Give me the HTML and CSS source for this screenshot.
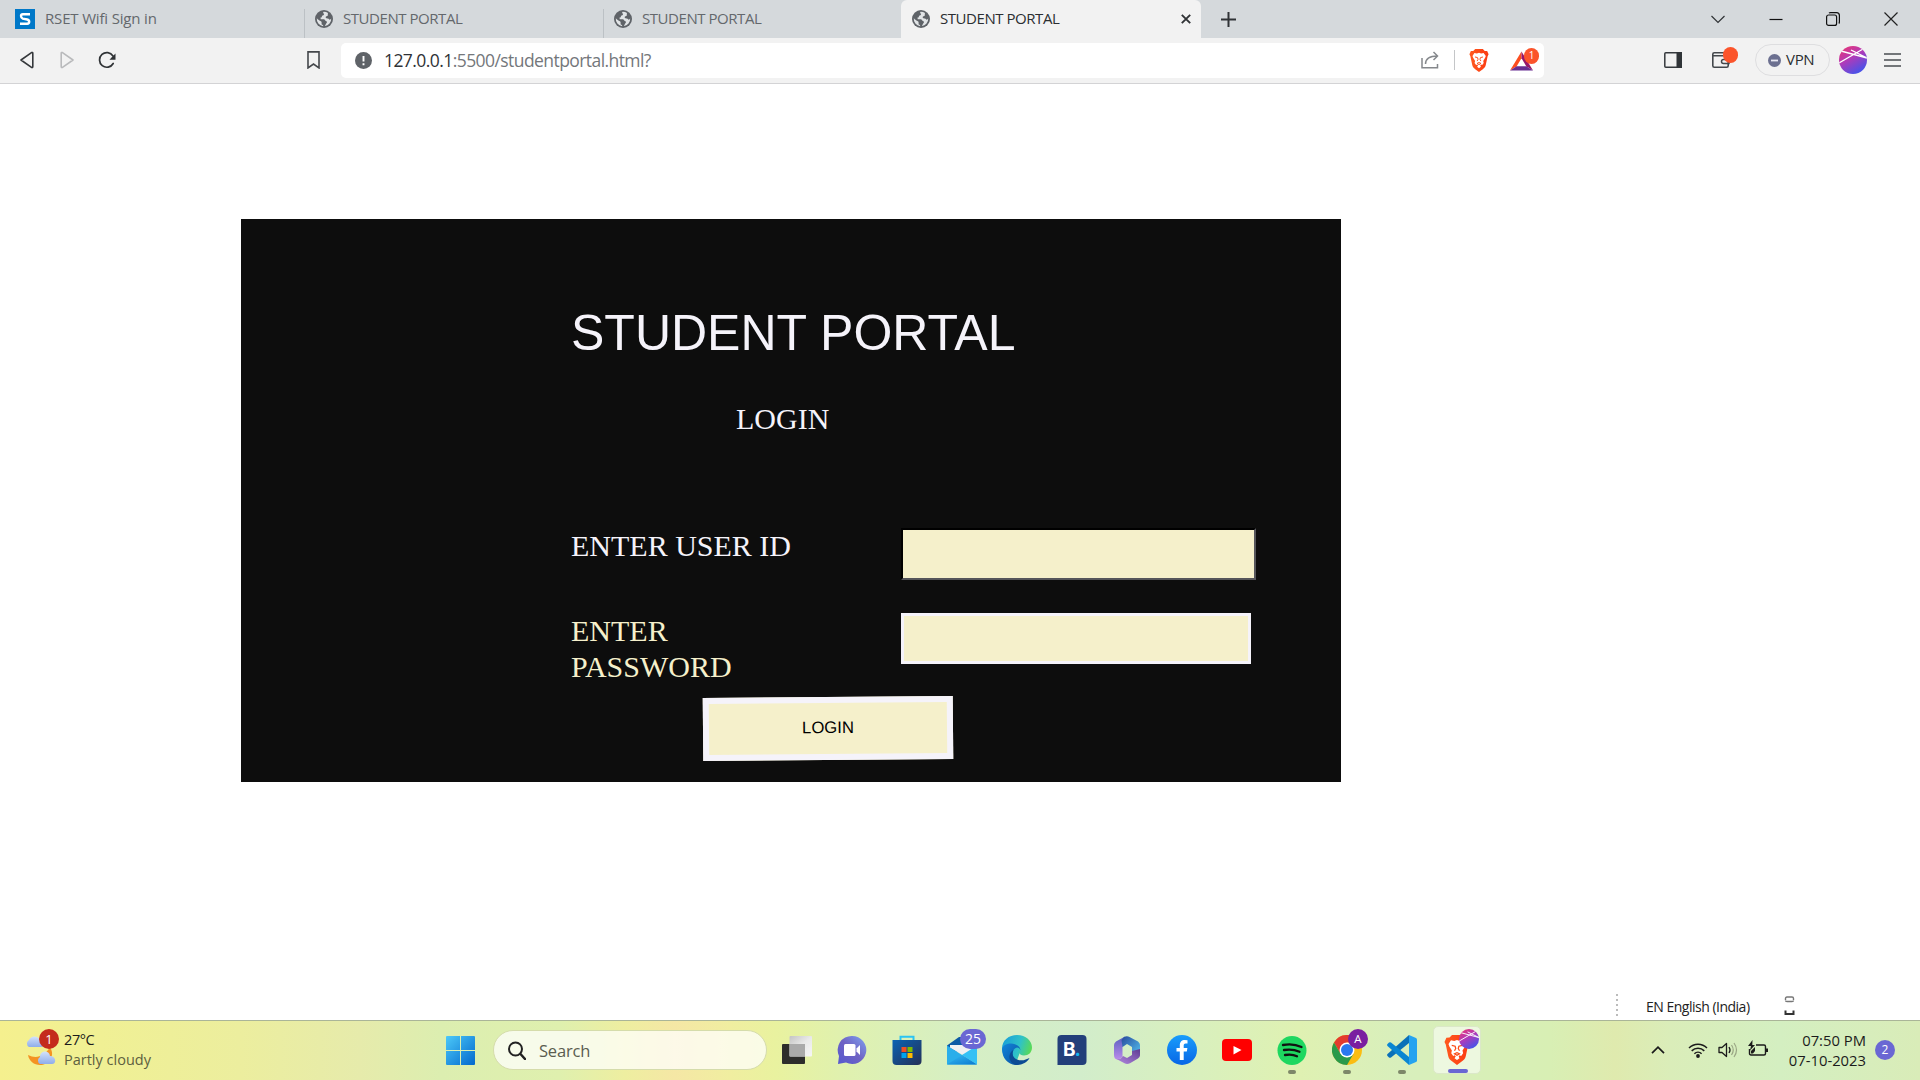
FILE: index.html
```html
<!DOCTYPE html>
<html lang="en">
<head>
<meta charset="utf-8">
<title>STUDENT PORTAL</title>
<link rel="stylesheet" href="styles.css">
</head>
<body>
<svg class="defs" width="0" height="0" aria-hidden="true">
  <defs>
    <linearGradient id="avatar" x1="0" y1="0" x2="0.6" y2="1"><stop offset="0" stop-color="#f0356b"/><stop offset=".5" stop-color="#b13ab8"/><stop offset="1" stop-color="#4a52e8"/></linearGradient>
    <linearGradient id="win" x1="0" y1="0" x2="1" y2="1"><stop offset="0" stop-color="#4cc9f8"/><stop offset="1" stop-color="#0268cd"/></linearGradient>
    <linearGradient id="chat" x1="1" y1="0" x2="0" y2="1"><stop offset="0" stop-color="#7fa4f2"/><stop offset=".5" stop-color="#6f63c4"/><stop offset="1" stop-color="#5558cf"/></linearGradient>
    <linearGradient id="store" x1="0" y1="0" x2="1" y2="1"><stop offset="0" stop-color="#0a63b4"/><stop offset="1" stop-color="#243056"/></linearGradient>
    <linearGradient id="edgeTop" x1="0" y1=".3" x2="1" y2=".6"><stop offset="0" stop-color="#1a9fd8"/><stop offset=".55" stop-color="#2fc2c8"/><stop offset="1" stop-color="#5fdd48"/></linearGradient>
    <linearGradient id="edgeLow" x1="0" y1="0" x2="1" y2="1"><stop offset="0" stop-color="#1285dc"/><stop offset="1" stop-color="#0b4f9c"/></linearGradient>
    <linearGradient id="mail" x1="0" y1="0" x2="1" y2="1"><stop offset="0" stop-color="#36bdf3"/><stop offset="1" stop-color="#0a78cf"/></linearGradient>
    <linearGradient id="fb" x1="0" y1="0" x2="0" y2="1"><stop offset="0" stop-color="#1a9dfb"/><stop offset="1" stop-color="#0766e6"/></linearGradient>
    <linearGradient id="brave" x1="0" y1="0" x2="1" y2="0"><stop offset="0" stop-color="#ff5a1f"/><stop offset="1" stop-color="#fb3a12"/></linearGradient>
    <linearGradient id="sheet" x1="0" y1="0" x2="1" y2="1"><stop offset="0" stop-color="#c4c4c4"/><stop offset=".5" stop-color="#e9e9e9"/><stop offset="1" stop-color="#f6f6f6"/></linearGradient>
    <linearGradient id="cloud" x1="0" y1="0" x2="0" y2="1"><stop offset="0" stop-color="#d3e2fb"/><stop offset="1" stop-color="#8fadea"/></linearGradient>
    <linearGradient id="m1" x1="0" y1="0" x2="0" y2="1"><stop offset="0" stop-color="#5a5fc0"/><stop offset="1" stop-color="#b98bea"/></linearGradient>
    <linearGradient id="m2" x1="0" y1="0" x2="1" y2="1"><stop offset="0" stop-color="#284a9c"/><stop offset="1" stop-color="#55c4f2"/></linearGradient>
    <linearGradient id="m3" x1="0" y1="1" x2="1" y2="0"><stop offset="0" stop-color="#b48be0"/><stop offset="1" stop-color="#5d3a92"/></linearGradient>
    <symbol id="globe" viewBox="0 0 18 18"><circle cx="9" cy="9" r="9" fill="#5f6368"/><path d="M8.6 1.8c-1 .9-.3 1.7.5 2 .2 1.3-1.200 1.700-2.200 2.200.2 1.100-.4 1.700-1.400 1.600l.2 1.600h3.400c1 .6 1 1.500 1.900 1.700 1.200.4 1.300 1.400.5 2.100l-1.700 3.100A7.200 7.200 0 0 0 16.200 8.500c-.6 1.300-1.700 1.500-2.400.6-.8-.9-2.300-.3-3-1.300-.5-1 .6-1.900 1.700-1.800.6-.9.1-1.800.5-2.900A7.200 7.200 0 0 0 8.600 1.800zM1.800 8.200A7.300 7.300 0 0 0 8.200 16.200c.2-1.200-.5-1.600-1.500-1.800-.3-1.500.3-2.300-.8-3.100C4.500 10.700 3 9.400 1.800 8.200z" fill="#e1e4e6"/></symbol>
    <symbol id="lion" viewBox="0 0 20 24"><path d="M6 0h8l2 2 2.500.2L20 5.500 19 7.500 17 17c-.5 2-1.500 3-3 4l-4 3-4-3c-1.500-1-2.500-2-3-4L1 7.500 0 5.500 1.500 2.200 4 2z" fill="url(#brave)"/><path d="M5.200 4.200l2.600.5L10 4l2.200.7 2.600-.5 2.300 3-.7 2-2 3.200.5 2.100-1.600 2.200-1.200-.6-.8 1L12 18.500 10 20l-2-1.500 1-1.400-.8-1-1.200.6-1.600-2.200.5-2.100-2-3.200-.7-2z" fill="#fff"/><path d="M5.800 8.300l2.700.7.500 1.800-1 1.800M14.200 8.300l-2.700.7-.5 1.800 1 1.800M8 15l2-.9 2 .9-2 1.300z" fill="none" stroke="#fb4a17" stroke-width="1"/></symbol>
    <symbol id="orb" viewBox="0 0 28 28"><clipPath id="disc"><circle cx="14" cy="14" r="14"/></clipPath><circle cx="14" cy="14" r="14" fill="url(#avatar)"/><path clip-path="url(#disc)" d="M2 5l26 7M0 17L24 3M12 4l16 8" stroke="#fff" stroke-width="1.300" fill="none"/></symbol>
  </defs>
</svg>

<header class="browser">
  <div class="tabs">
    <div class="tab tab-first">
      <svg class="tab-icon-s" viewBox="0 0 20 20"><path d="M0 0h20v20H0z" fill="#0078c8"/><path d="M15 5.200H7.800Q6 5.200 6 7t1.800 2.600l4.400.9q2 .5 2 2.300t-2 2H5" fill="none" stroke="#fff" stroke-width="2.400"/></svg>
      <span>RSET Wifi Sign in</span>
    </div>
    <div class="tab"><svg class="tab-icon"><use href="#globe"/></svg><span>STUDENT PORTAL</span></div>
    <div class="tab"><svg class="tab-icon"><use href="#globe"/></svg><span>STUDENT PORTAL</span></div>
    <div class="tab tab-active"><svg class="tab-icon"><use href="#globe"/></svg><span>STUDENT PORTAL</span>
      <svg class="tab-close" viewBox="0 0 10 10"><path d="M.8.8l8.400 8.400M9.200.8L.8 9.200" stroke="#303336" stroke-width="1.900"/></svg>
    </div>
    <svg class="new-tab" viewBox="0 0 15 15"><path d="M7.500 0v15M0 7.500h15" stroke="#303336" stroke-width="2"/></svg>
    <div class="window-buttons">
      <svg viewBox="0 0 14 14"><path d="M.5 4L7 10.500 13.500 4" fill="none" stroke="#303336" stroke-width="1.200"/></svg>
      <svg viewBox="0 0 14 14"><path d="M.5 7.500h13" stroke="#111" stroke-width="1.200"/></svg>
      <svg viewBox="0 0 14 14"><rect x=".6" y="3" width="10" height="10.400" rx="2" fill="none" stroke="#111" stroke-width="1.200"/><path d="M3 1.200q.6-.6 1.500-.6H10.500q2.900 0 2.900 2.900V10q0 .8-.6 1.500" fill="none" stroke="#111" stroke-width="1.200"/></svg>
      <svg viewBox="0 0 14 14"><path d="M.5.5l13 13M13.500.5l-13 13" stroke="#222" stroke-width="1.200"/></svg>
    </div>
  </div>
  <div class="toolbar">
    <div class="nav">
      <svg viewBox="0 0 16 18"><path d="M12.500 1.600L2 9l10.500 7.400q1.300.5 1.300-.8V2.400q0-1.300-1.300-.8z" fill="none" stroke="#35383b" stroke-width="1.600" stroke-linejoin="round"/></svg>
      <svg viewBox="0 0 16 18"><path d="M3.500 1.600L14 9 3.500 16.400q-1.300.5-1.300-.8V2.400q0-1.300 1.300-.8z" fill="none" stroke="#b9babc" stroke-width="1.600" stroke-linejoin="round"/></svg>
      <svg class="reload" viewBox="0 0 18 18"><path d="M15 5A7.300 7.300 0 1 0 15.200 12.500" fill="none" stroke="#303336" stroke-width="1.700" stroke-linecap="round"/><path d="M17.500 2.500v6.300h-6L14 6z" fill="#303336"/></svg>
    </div>
    <svg class="bookmark" viewBox="0 0 12 17"><path d="M.8.8h10.400V16L6 12.300.8 16z" fill="none" stroke="#44474b" stroke-width="1.500"/></svg>
    <div class="address">
      <svg class="info" viewBox="0 0 17 17"><circle cx="8.500" cy="8.500" r="8.500" fill="#5f6368"/><path d="M8.500 4v5.500M8.500 11.200v2" stroke="#fff" stroke-width="1.900"/></svg>
      <span class="url"><b>127.0.0.1</b>:5500/studentportal.html?</span>
      <svg class="share" viewBox="0 0 18 18"><path d="M1 7v9.800h15.500V13M4.500 13C4.500 7.500 9 5 16.500 5M12.500 1l4 4-4 4" fill="none" stroke="#85888c" stroke-width="1.500"/></svg>
      <i class="rule"></i>
      <svg class="shield"><use href="#lion"/></svg>
      <div class="rewards">
        <svg viewBox="0 0 24 20"><path d="M12 0L0 20l7-4.500L12 7z" fill="#fb4d20"/><path d="M12 0l12 20-7-4.500L12 7z" fill="#95176a"/><path d="M0 20h24l-7-4.500H7z" fill="#662d91"/></svg>
        <span class="count">1</span>
      </div>
    </div>
    <svg class="sidebar" viewBox="0 0 18 16"><rect x=".8" y=".8" width="16.400" height="14.400" rx="1" fill="none" stroke="#35393d" stroke-width="1.500"/><path d="M12.500 0H18v16h-5.500z" fill="#303438"/></svg>
    <div class="wallet">
      <svg viewBox="0 0 18 16"><rect x=".8" y=".8" width="15.400" height="14.400" rx="1.500" fill="none" stroke="#44484c" stroke-width="1.600"/><path d="M1 3.800h15M17 7.500h-5.500q-2 0-2 2t2 2H17z" fill="none" stroke="#44484c" stroke-width="1.500"/></svg>
      <i class="dot"></i>
    </div>
    <div class="vpn"><svg viewBox="0 0 13 13"><circle cx="6.500" cy="6.500" r="6.500" fill="#6c7090"/><path d="M3 6.500h7" stroke="#e8e8f2" stroke-width="1.800"/></svg><span>VPN</span></div>
    <svg class="avatar"><use href="#orb"/></svg>
    <svg class="menu" viewBox="0 0 17 14"><path d="M0 1h17M0 7h17M0 13h17" stroke="#4a4d51" stroke-width="1.500"/></svg>
  </div>
</header>

<main class="page">
  <form class="card">
    <h1>STUDENT PORTAL</h1>
    <h2>LOGIN</h2>
    <div class="field">
      <label for="uid">ENTER USER ID</label>
      <input id="uid" class="uid" type="text">
    </div>
    <div class="field field-password">
      <label for="pwd">ENTER<br>PASSWORD</label>
      <input id="pwd" class="pwd" type="password">
    </div>
    <button type="button">LOGIN</button>
  </form>
  <div class="language">
    <i class="grip"></i>
    <span>EN English (India)</span>
    <svg viewBox="0 0 10 20"><path d="M1 4V2.500Q1 1 2.500 1h5Q9 1 9 2.500V4M1 4.500q0 1 1.500 1h5q1.500 0 1.500-1" fill="none" stroke="#777" stroke-width="1.400"/><path d="M1 14.500V18h2.500M9 14.500V18H6.500M3.500 18h3" fill="none" stroke="#333" stroke-width="2"/></svg>
  </div>
</main>

<footer class="taskbar">
  <div class="weather">
    <div class="weather-icon">
      <svg viewBox="0 0 31 32"><path d="M3 22c8 4 16 2 22-8 6 10-2 18-10 18-6 0-11-4-12-10z" fill="#f49322"/><path d="M4 14a4 4 0 0 1 0-7 6 6 0 0 1 11 0c4 0 5 7 1 7z" fill="url(#cloud)"/><path d="M15 31a4 4 0 0 1 0-7 5 5 0 0 1 10-1c6 0 7 8 2 8z" fill="url(#cloud)"/></svg>
      <span class="alert">1</span>
    </div>
    <div class="weather-text"><span class="temp">27°C</span><span class="sky">Partly cloudy</span></div>
  </div>
  <svg class="start" viewBox="0 0 29 29"><path d="M0 1q0-1 1-1h13v14H0zM15 0h13q1 0 1 1v13H15zM0 15h14v14H1q-1 0-1-1zM15 15h14v13q0 1-1 1H15z" fill="url(#win)"/></svg>
  <div class="search">
    <svg viewBox="0 0 18 18"><circle cx="7.500" cy="7.500" r="6.500" fill="none" stroke="#222" stroke-width="2"/><path d="M12.500 12.500l4.500 5" stroke="#222" stroke-width="2.500" stroke-linecap="round"/></svg>
    <span>Search</span>
  </div>
  <div class="apps">
    <div class="app"><svg viewBox="0 0 30 30"><rect x="0" y="9" width="23" height="20" rx="1" fill="#2d2d2b"/><rect x="7.500" y="1" width="22.500" height="20.500" rx="1" fill="url(#sheet)"/><path d="M7.500 9H23v12.500H7.500z" fill="#aaa"/></svg></div>
    <div class="app"><svg viewBox="0 0 30 30"><path d="M15 1a14 14 0 1 1-6 26.500L1 29l1-8A14 14 0 0 1 15 1z" fill="url(#chat)"/><rect x="7" y="9" width="11.500" height="12" rx="1.500" fill="#fff"/><path d="M19.500 13.500l3.500-3.500v10l-3.500-3.500z" fill="#fff"/></svg></div>
    <div class="app"><svg viewBox="0 0 30 30"><path d="M8.500 6V1.800h13V6" fill="none" stroke="#2cc4f3" stroke-width="2"/><path d="M.5 5h29v21q0 4-4 4h-21q-4 0-4-4z" fill="url(#store)"/><path d="M9.500 12h5v5h-5z" fill="#f25022"/><path d="M15.500 12h5v5h-5z" fill="#7fba00"/><path d="M9.500 18h5v5h-5z" fill="#00a4ef"/><path d="M15.500 18h5v5h-5z" fill="#ffb900"/></svg></div>
    <div class="app"><svg viewBox="0 0 30 30"><path d="M0 10.500L12 2h6l12 8.500v6H0z" fill="#0b5aa6"/><path d="M3 10h24v6l-11 4-13-7z" fill="#f0f0f2"/><path d="M0 10.500l30 19H0z" fill="#2aaeea"/><path d="M30 10.500v19L15 20z" fill="#35c1f5"/><path d="M0 29.500l15-9.500 15 9.500z" fill="url(#mail)"/></svg><span class="badge badge-mail">25</span></div>
    <div class="app"><svg viewBox="0 0 30 30"><path d="M0 14C0 5 7 0 15 0c9 0 15 6 15 12.500 0 5-3.500 8-8 8-3.500 0-5-1.500-4-3.200L14 28 2 22z" fill="url(#edgeTop)"/><path d="M0 14C1 10 5 8.500 9 8.500c5.500 0 9.500 3.500 9.500 7q-1-3-3.500-3-4 1-4.500 5.500-.4 8 9 10-2.500 2-6 1.900C6 29.500 0 23 0 14z" fill="url(#edgeLow)"/><path d="M11.500 15c-2 4-.5 8 3.500 9.500 5 1.900 9 .2 12.500-1.500-2 4-7 7-12.500 7-5-.5-8-5-7.500-9 .3-3 2-5.200 4-6z" fill="#0c4b94"/></svg></div>
    <div class="app"><svg viewBox="0 0 30 30"><path d="M.5 4q0-4 4-4h21q4 0 4 4v22q0 4-4 4H.5z" fill="#223f7a"/></svg><span class="letter">B<em>.</em></span></div>
    <div class="app"><svg viewBox="0 0 30 30"><path d="M13 1.500L4 6.500Q2 8 2 10v10q0 2 1 3.500 2 1.500 4.500.5l3-2V12l2-2.500z" fill="url(#m1)"/><path d="M12 2q3-1.500 5.500 0l8.500 4.500Q28 8 28 10v9l-2 2-6-3v-6l-5-3-4.500 3-1-7z" fill="url(#m2)"/><path d="M28 14v6.500q0 1.500-2 3L18 28.300q-3 1.200-5.500 0L4 23.800q5 1.200 7-2.800l4 2 5-3v-4z" fill="url(#m3)"/></svg></div>
    <div class="app"><svg viewBox="0 0 30 30"><circle cx="15" cy="15" r="15" fill="url(#fb)"/><path d="M12.800 25v-8.500H9.500V13h3.300v-2.500c0-3.700 2-5.500 5-5.500l2.700.2v3.300h-1.900c-1.600 0-1.900 1-1.900 2V13h3.700l-.6 3.500h-3.100V25z" fill="#fff"/></svg></div>
    <div class="app"><svg viewBox="0 0 30 30"><rect y="4" width="30" height="22" rx="4" fill="#f00"/><path d="M11.500 11l8 4-8 4.500z" fill="#fff"/></svg></div>
    <div class="app"><svg viewBox="0 0 30 30"><circle cx="15" cy="15.500" r="14.500" fill="#1ed760"/><path d="M6 10q10-2 18.500 2M7 15q8.500-1.500 15.500 1.800M8 20q7-1.300 12 1.300" fill="none" stroke="#111" stroke-width="2.300" stroke-linecap="round"/></svg><i class="run"></i></div>
    <div class="app"><svg viewBox="0 0 30 30"><circle cx="15" cy="15" r="15" fill="#fbbd12"/><path d="M2 7.500A15 15 0 0 1 28 7.500H15L8.500 18.700z" fill="#e33b2e"/><path d="M2 7.500l6.500 11.200L15 22.500l6.500-3.800L15 30A15 15 0 0 1 2 7.500z" fill="#2a9a4a"/><circle cx="15" cy="15" r="7.500" fill="#fff"/><circle cx="15" cy="15" r="6" fill="#2a78ee"/></svg><span class="badge badge-a">A</span><i class="run"></i></div>
    <div class="app"><svg viewBox="0 0 30 30"><path d="M22 0v8L4 22.500q-1 .7-2 0l-1.500-1.500q-.8-1 0-2z" fill="#0a70b8"/><path d="M22 30v-8L4 7.500q-1-.7-2 0L.5 9q-.8 1 0 2z" fill="#0a86d2"/><path d="M22 0l7 3q1 .5 1 1.500v21q0 1-1 1.500l-7 3z" fill="#25a3f0"/></svg><i class="run"></i></div>
    <div class="app app-active"><svg class="app-lion"><use href="#lion"/></svg><svg class="app-orb"><use href="#orb"/></svg><i class="run run-active"></i></div>
  </div>
  <div class="tray">
    <svg class="up" viewBox="0 0 14 8"><path d="M1 7.200l6-6 6 6" fill="none" stroke="#1b1b1b" stroke-width="1.700"/></svg>
    <svg class="wifi" viewBox="0 0 20 16"><path d="M1 6a12.700 12.700 0 0 1 18 0M3.700 8.900a9 9 0 0 1 12.600 0M6.400 11.700a5.200 5.200 0 0 1 7.200 0" fill="none" stroke="#1b1b1b" stroke-width="1.500"/><circle cx="10" cy="14" r="1.900" fill="#1b1b1b"/></svg>
    <svg class="volume" viewBox="0 0 20 16"><path d="M1 5.500h3l4.500-4v13L4 10.500H1z" fill="none" stroke="#1b1b1b" stroke-width="1.300" stroke-linejoin="round"/><path d="M11 5q2 3 0 6" fill="none" stroke="#1b1b1b" stroke-width="1.300"/><path d="M13.500 3q3.500 5 0 10M16 1q5 7 0 14" fill="none" stroke="#9aa584" stroke-width="1.200"/></svg>
    <svg class="battery" viewBox="0 0 20 17"><path d="M8 5h8q1.500 0 1.500 1.500v7q0 1.500-1.500 1.500H3q-1.500 0-1.500-1.500V9" fill="none" stroke="#1b1b1b" stroke-width="1.400"/><path d="M18 8.500h2v3.500h-2zM4.500 0L0 6h3l-1 4.500L7 5H4.300zM3 13.500V11l4-4v4l-2 2.500z" fill="#1b1b1b"/></svg>
    <div class="clock"><span>07:50 PM</span><span>07-10-2023</span></div>
    <span class="notices">2</span>
  </div>
</footer>
</body>
</html>
```
FILE: styles.css
```css
* { box-sizing: border-box; }
html, body { height: 100%; }
body {
  margin: 0;
  display: flex;
  flex-direction: column;
  width: 1920px;
  height: 1080px;
  overflow: hidden;
  background: #fff;
  font-family: "Open Sans", "Noto Sans", sans-serif;
}
svg { display: block; flex: none; }
.defs { position: absolute; }

/* browser frame */
.browser { flex: none; }
.tabs {
  display: flex;
  height: 38px;
  background: #d5d9dc;
  color: #64686c;
  font-size: 15px;
  letter-spacing: -0.45px;
}
.tab {
  display: flex;
  align-items: center;
  gap: 10px;
  width: 299px;
  padding-left: 11px;
  white-space: nowrap;
  background: linear-gradient(#bcc1c5, #bcc1c5) 0 9px / 1px 29px no-repeat;
}
.tab span { margin-top: -2px; }
.tab-first { width: 304px; padding-left: 15px; gap: 10px; background: none; letter-spacing: -0.17px; }
.tab-icon-s { width: 20px; height: 20px; }
.tab-icon { width: 18px; height: 18px; }
.tab-active { background: #f2f2f2; width: 300px; margin-left: -1px; border-radius: 6px 6px 0 0; color: #2b2e31; }
.tab-close { width: 10px; height: 10px; margin-left: auto; margin-right: 10px; }
.new-tab { width: 15px; height: 15px; align-self: center; margin-left: 20px; }
.window-buttons { display: flex; align-items: center; gap: 43.700px; margin-left: auto; margin-right: 22px; }
.window-buttons svg { width: 14px; height: 14px; }

.toolbar {
  display: flex;
  align-items: center;
  height: 46px;
  padding-bottom: 1px;
  background: #f2f2f2;
  border-bottom: 1px solid #d3d3d5;
}
.nav { display: flex; align-items: center; gap: 24px; margin-left: 19px; width: 288px; }
.nav svg { width: 16px; height: 18px; }
.nav .reload { width: 18px; height: 18px; margin-left: -1px; }
.bookmark { width: 13px; height: 18px; }
.address {
  display: flex;
  align-items: center;
  width: 1203px;
  height: 35px;
  margin-left: 21px;
  padding-left: 14px;
  background: #fff;
  border-radius: 5px;
}
.info { width: 17px; height: 17px; }
.url { margin-left: 12px; font-size: 17.500px; letter-spacing: -0.57px; color: #74777b; white-space: nowrap; }
.url b { font-weight: 400; color: #2f3236; }
.share { width: 18px; height: 18px; margin-left: auto; }
.rule { width: 1px; height: 20px; margin-left: 15px; background: #c4c6c8; }
.shield { width: 20px; height: 23px; margin-left: 14px; }
.rewards { position: relative; margin: 0 10px 0 21px; padding-top: 1px; width: 24px; }
.rewards svg { width: 23px; height: 20px; }
.count {
  position: absolute;
  left: 14px;
  top: -2px;
  width: 15px;
  height: 16px;
  border-radius: 8px;
  background: #fb542b;
  color: #fff;
  font-size: 10px;
  line-height: 15px;
  text-align: center;
}
.sidebar { width: 18px; height: 16px; margin-left: 119.500px; }
.wallet { position: relative; margin-left: 30px; }
.wallet svg { width: 18px; height: 16px; }
.dot { position: absolute; left: 11px; top: -5px; width: 15px; height: 16px; border-radius: 8px; background: #fb542b; }
.vpn {
  display: flex;
  align-items: center;
  gap: 5px;
  width: 75px;
  height: 32px;
  margin-left: 25px;
  padding-left: 12.500px;
  border: 1px solid #dedee0;
  border-radius: 16px;
  font-size: 15px;
  letter-spacing: -0.3px;
  color: #2b2e31;
}
.vpn span { margin-top: -2px; }
.vpn svg { width: 13px; height: 13px; }
.avatar { width: 28px; height: 28px; margin-left: 9.500px; }
.menu { width: 17px; height: 14px; margin-left: 17px; }

/* web page */
.page { flex: 1; display: flex; flex-direction: column; padding: 135px 0 0 241px; }
.card {
  display: flex;
  flex-direction: column;
  width: 1100px;
  height: 563px;
  padding: 85px 85px 0 330px;
  background: #0d0d0d;
  color: #f5f3fa;
  font: 30px/36px "Liberation Serif", "Times New Roman", serif;
}
h1 { margin: 0; font: 50px/58px "Liberation Sans", Arial, sans-serif; }
h2 { margin: 39px 0 91px 165px; font: inherit; }
.field { display: flex; justify-content: space-between; height: 52px; }
.field label { white-space: nowrap; }
.field-password { height: 72px; margin-top: 33px; color: #f5f0cb; }
.field input { width: 355px; height: 52px; padding: 0; background: #f5f0cb; border-radius: 0; }
.uid { border: 2px solid; border-color: #000 #55555a #55555a #000; }
.field .pwd { width: 350px; height: 51px; margin-right: 5px; border: 3px solid #f5f3fa; }
button {
  width: 250px;
  height: 63px;
  margin: 12px 0 0 132px;
  padding: 0 0 1px;
  border: 6px solid #f5f3fa;
  background: #f5f0cb;
  color: #000;
  font: 16.670px "Liberation Sans", Arial, sans-serif;
  transform: rotate(-0.5deg);
}
.language { display: flex; align-items: center; margin: auto 0 2px 1375px; height: 24px; }
.grip { width: 2px; height: 24px; background: repeating-linear-gradient(#bbb 0 2px, #fff 2px 5px); }
.language span { margin-left: 28px; width: 138px; font-size: 14px; letter-spacing: -0.5px; color: #222; white-space: nowrap; }
.language svg { width: 11px; height: 20px; }

/* taskbar */
.taskbar {
  display: flex;
  align-items: center;
  flex: none;
  height: 60px;
  padding-bottom: 1px;
  border-top: 1px solid #aab598;
  background: linear-gradient(90deg, #f5f08e 0, #f0f094 100px, #ecee9e 240px, #e6ebab 360px, #dceeb0 440px, #dff0ae 560px, #eeeea0 625px, #f5e7a5 675px, #f0eea0 730px, #e9f29f 775px, #e0f1ae 840px, #d6efc4 960px, #d2edcb 1080px, #d9f0bd 1200px, #dff1b2 1300px, #d8efbc 1400px, #d8efb4 1550px, #dfeaae 1615px, #daedb9 1670px, #d4efc1 1780px, #d9ecb8 1920px);
}
.weather { display: flex; align-items: center; width: 461px; padding-left: 25px; margin-right: -15px; margin-top: -1px; }
.weather-icon { position: relative; width: 31px; margin-top: -2px; }
.weather-icon svg { width: 31px; height: 32px; }
.alert {
  position: absolute;
  left: 14px;
  top: -4px;
  width: 20px;
  height: 20px;
  border-radius: 50%;
  background: #c42b1c;
  color: #fff;
  font-size: 13px;
  line-height: 20px;
  text-align: center;
}
.weather-text { display: flex; flex-direction: column; margin-left: 8px; font-size: 14.500px; line-height: 20px; color: #1b1b1b; }
.temp { letter-spacing: -0.4px; }
.sky { color: #5d6040; letter-spacing: 0; }
.start { width: 29px; height: 29px; }
.search {
  display: flex;
  align-items: center;
  width: 274px;
  height: 40px;
  margin-left: 18px;
  padding-left: 14px;
  border: 1px solid #d5dcab;
  border-radius: 20px;
  background: rgba(255, 255, 255, .74);
}
.search svg { width: 18px; height: 19px; }
.search span { margin-left: 13px; font-size: 16.500px; letter-spacing: -0.2px; color: #5b5d50; }
.apps { display: flex; margin-left: 2px; }
.app { position: relative; display: grid; place-items: center; width: 55px; height: 48px; }
.app svg { width: 30px; height: 30px; }
.letter { position: absolute; left: 19px; top: 10px; color: #fff; font: 700 19px/28px Inter, sans-serif; letter-spacing: -1px; }
.letter em { font-style: normal; color: #14b4f0; }
.badge {
  position: absolute;
  right: 3px;
  top: 3px;
  height: 20px;
  border-radius: 10px;
  color: #fff;
  font-size: 14px;
  line-height: 20px;
  text-align: center;
}
.badge-mail { width: 26px; background: #6a67d3; }
.badge-a { width: 20px; right: 6px; background: #7a1fa0; font-size: 11.500px; }
.run { position: absolute; left: 23.500px; bottom: 0; width: 8px; height: 4px; border-radius: 2px; background: #7d8769; }
.run-active { left: 14px; width: 20px; background: #6a67d3; }
.app-active { width: 48px; margin-left: 4px; background: rgba(255, 255, 255, .55); border: 1px solid #dbe8c8; border-radius: 5px; }
.app-active .app-lion { width: 26px; height: 30px; }
.app-active .app-orb { position: absolute; left: 25px; top: 2px; width: 20px; height: 20px; }
.tray { display: flex; align-items: center; margin-left: auto; margin-right: 25px; color: #1b1b1b; }
.up { width: 14px; height: 8px; }
.wifi { width: 20px; height: 16px; margin-left: 23px; }
.volume { width: 20px; height: 16px; margin-left: 10px; }
.battery { width: 20px; height: 17px; margin-left: 10px; margin-top: -3px; }
.clock { display: flex; flex-direction: column; align-items: flex-end; width: 98px; margin-top: -1px; font-size: 14.800px; line-height: 20px; letter-spacing: 0; }
.notices { width: 20px; height: 20px; margin-left: 9px; border-radius: 50%; background: #6a67d3; color: #fff; font-size: 12px; line-height: 20px; text-align: center; }
```
